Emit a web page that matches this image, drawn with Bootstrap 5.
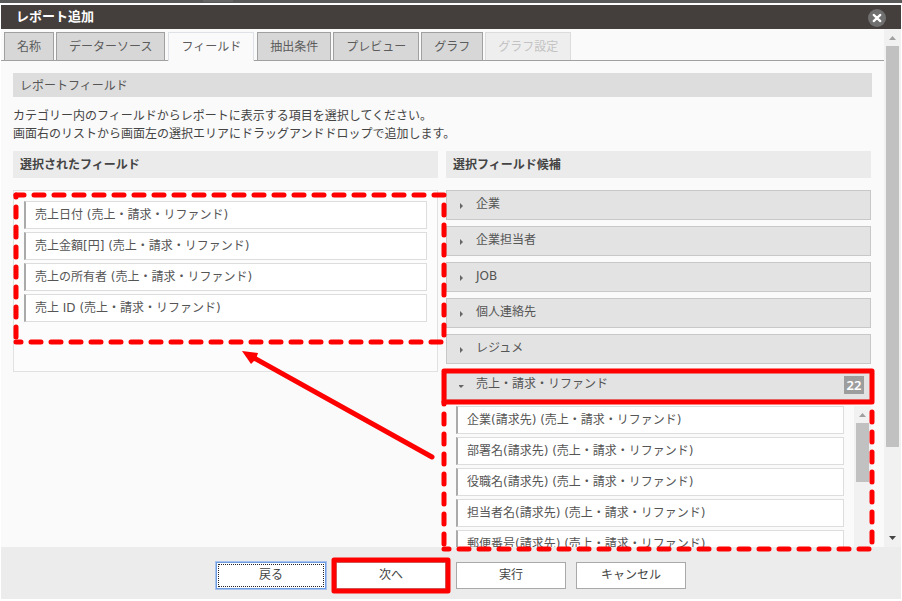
<!DOCTYPE html>
<html lang="ja">
<head>
<meta charset="utf-8">
<meta name="viewport" content="width=device-width, initial-scale=1">
<title>レポート追加</title>
<link href="https://cdn.jsdelivr.net/npm/bootstrap@5.3.0/dist/css/bootstrap.min.css" rel="stylesheet">
<style>
body{font-family:"DejaVu Sans","Noto Sans CJK JP",sans-serif;font-size:12px;line-height:18px;color:#444;background:#fff}
.jp{font-family:"Noto Sans CJK JP",sans-serif}
.min-h-0{min-height:0}
.min-w-0{min-width:0}
.top-strip{height:3px;background:#595959;margin-bottom:2px;flex:none}
.top-strip span{display:block;width:30px;height:2px;margin-left:203px;background:#666}
.dialog{margin:0 1px 2px;background:#fafafa}
.title-bar{height:24px;flex:none;background:#443f3d;color:#fff;padding:0 15px}
.title-bar h1{font-size:13px;line-height:18px;font-weight:700;padding-bottom:2px}
.close-btn{width:18px;height:18px;margin-top:1px}
.tab-bar{flex:none;padding:3px 0 0 3px;gap:2px;border-bottom:1px solid #a0a0a0}
.tab-bar .nav-link{height:28px;padding:4px 12px 5px;border:1px solid #a0a0a0;border-bottom:0;border-radius:0;background:#d7d7d7;color:#5c5c5c;margin:0;line-height:18px}
.tab-bar .nav-link:hover{border-color:#a0a0a0;color:#333}
.tab-bar .nav-link.active{background:#fafafa;color:#5c5c5c;height:29px;margin:0 1px -1px}
.tab-bar .nav-link.disabled{background:#eee;border-color:#dcdcdc;color:#c3c3c3}
.page-area{padding:12px 13px 0 12px}
.page-title{flex:none;background:#ddd;padding:3px 7px;font-size:12px;line-height:18px;color:#555;margin:0 -1px 9px 0}
.page-note{flex:none;margin-bottom:9px}
.columns{gap:8px}
.col-head{flex:none;background:#ebebeb;font-size:12px;line-height:18px;font-weight:700;color:#444;padding:4px 7px 5px;margin-bottom:12px}
.drop-area{border:1px solid #e1e1e1;height:182px;padding:10px;background:#fcfcfc}
.field-item{height:28px;padding:4px 9px;margin-bottom:3px;background:#fff;border:1px solid #ddd;border-left:2px solid #aaa;color:#555;white-space:nowrap;list-style:none}
.cat-btn{flex:none;height:30px;border:1px solid #c8c8c8;background:#e3e3e3;color:#555;padding:0 6px 0 12px;margin-bottom:6px;font-size:12px;line-height:18px}
.cat-btn svg{width:8px;height:8px;margin:2px 9px 0 0;fill:#666}
.cat-btn .lbl{padding-bottom:2px}
.count-tag{background:#9d9d9d;color:#fff;font:600 13px/18px "Noto Sans",sans-serif;width:20px;text-align:center}
.cand-list{padding-left:10px;gap:10px}
.rail{width:17px;background:#f1f1f1;padding:0 2px;flex:none}
.rail svg{width:7px;height:4px;flex:none}
.rail .up{margin:7px 3px 6px;fill:#a0a0a0}
.rail .down{margin:0 3px 7px;fill:#444}
.thumb{background:#c1c1c1;flex:none}
.thumb-page{height:401px}
.thumb-list{height:59px}
.foot{flex:none;background:#ececec;padding:15px 0 10px;gap:10px}
.foot .btn{width:110px;height:27px;padding:2px 0 5px;border:1px solid #a9a9a9;border-radius:0;background:#fff;color:#444;font-size:12px;line-height:18px}
.foot .btn-focus{border-color:#6f9be0;outline:1px solid #a8c3ee;box-shadow:none;padding:0}
.btn-focus span{display:block;border:1px dotted #222;height:23px;margin:1px;line-height:18px}
/* red annotations laid over the dialog */
.note-mark{position:absolute;overflow:visible;pointer-events:none;z-index:5;fill:none;stroke:#f00;stroke-width:5;stroke-linecap:round;stroke-linejoin:round}
.note-mark line{stroke-dasharray:10 10}
.mark-drop{left:3px;top:5px;width:calc(100% + 3px);height:147px}
.mark-cat{left:-2px;top:1px;width:calc(100% + 3px);height:31px}
.mark-list{left:-2px;top:-4px;width:calc(100% + 3px);height:calc(100% + 6px)}
.mark-next{left:-2px;top:-2px;width:114px;height:31px}
.mark-arrow{right:0;top:200px;width:196px;height:110px}
</style>
<script src="https://cdn.jsdelivr.net/npm/bootstrap@5.3.0/dist/js/bootstrap.bundle.min.js"></script>
</head>
<body class="vh-100 d-flex flex-column overflow-hidden">
<div class="top-strip"><span></span></div>
<div class="dialog d-flex flex-column flex-grow-1 min-h-0" role="dialog" aria-labelledby="dlg-title">
  <header class="title-bar d-flex align-items-center justify-content-between">
    <h1 id="dlg-title" class="m-0 jp">レポート追加</h1>
    <button type="button" class="close-btn btn p-0 border-0 d-flex" aria-label="閉じる">
      <svg viewBox="0 0 18 18" width="18" height="18"><circle cx="9" cy="9" r="9" fill="#707070"/><path d="M5.7 5.9l6.6 6.2M12.3 5.9l-6.6 6.2" stroke="#fff" stroke-width="2.2" stroke-linecap="round"/></svg>
    </button>
  </header>
  <div class="d-flex flex-grow-1 min-h-0">
    <main class="d-flex flex-column flex-grow-1 min-w-0 min-h-0">
      <nav class="nav nav-tabs tab-bar jp">
        <a class="nav-link" href="#">名称</a>
        <a class="nav-link" href="#">データーソース</a>
        <a class="nav-link active" aria-current="page" href="#">フィールド</a>
        <a class="nav-link" href="#">抽出条件</a>
        <a class="nav-link" href="#">プレビュー</a>
        <a class="nav-link" href="#">グラフ</a>
        <a class="nav-link disabled" aria-disabled="true" href="#">グラフ設定</a>
      </nav>
      <div class="page-area d-flex flex-column flex-grow-1 min-h-0">
        <h2 class="page-title jp fw-normal">レポートフィールド</h2>
        <p class="page-note jp">カテゴリー内のフィールドからレポートに表示する項目を選択してください。<br>画面右のリストから画面左の選択エリアにドラッグアンドドロップで追加します。</p>
        <div class="columns d-flex flex-grow-1 min-h-0">
          <section class="w-50 position-relative">
            <h3 class="col-head jp">選択されたフィールド</h3>
            <div class="position-relative">
              <ul class="drop-area m-0">
                <li class="field-item">売上日付 (売上・請求・リファンド)</li>
                <li class="field-item">売上金額[円] (売上・請求・リファンド)</li>
                <li class="field-item">売上の所有者 (売上・請求・リファンド)</li>
                <li class="field-item">売上 ID (売上・請求・リファンド)</li>
              </ul>
              <svg class="note-mark mark-drop" aria-hidden="true">
                <line x1="0" y1="0" x2="100%" y2="0" stroke-dashoffset="2"/>
                <line x1="100%" y1="0" x2="100%" y2="100%" stroke-dashoffset="10"/>
                <line x1="100%" y1="100%" x2="0" y2="100%" stroke-dashoffset="17"/>
                <line x1="0" y1="100%" x2="0" y2="0" stroke-dashoffset="15"/>
              </svg>
            </div>
            <svg class="note-mark mark-arrow" aria-hidden="true"><path d="M12 7L190 106"/><path d="M0 0L16 2L14 8L9 13Z" fill="#f00" stroke="none"/></svg>
          </section>
          <section class="w-50 d-flex flex-column min-h-0">
            <h3 class="col-head jp">選択フィールド候補</h3>
            <button type="button" class="cat-btn d-flex align-items-center"><svg viewBox="0 0 8 8"><path d="M1 1l3 3-3 3z"/></svg><span class="lbl">企業</span></button>
            <button type="button" class="cat-btn d-flex align-items-center"><svg viewBox="0 0 8 8"><path d="M1 1l3 3-3 3z"/></svg><span class="lbl">企業担当者</span></button>
            <button type="button" class="cat-btn d-flex align-items-center"><svg viewBox="0 0 8 8"><path d="M1 1l3 3-3 3z"/></svg><span class="lbl">JOB</span></button>
            <button type="button" class="cat-btn d-flex align-items-center"><svg viewBox="0 0 8 8"><path d="M1 1l3 3-3 3z"/></svg><span class="lbl">個人連絡先</span></button>
            <button type="button" class="cat-btn d-flex align-items-center"><svg viewBox="0 0 8 8"><path d="M1 1l3 3-3 3z"/></svg><span class="lbl">レジュメ</span></button>
            <div class="position-relative">
              <button type="button" class="cat-btn d-flex align-items-center w-100" aria-expanded="true"><svg viewBox="0 0 8 8"><path d="M-1 3h6l-3 3z"/></svg><span class="lbl">売上・請求・リファンド</span><span class="count-tag ms-auto">22</span></button>
              <svg class="note-mark mark-cat" aria-hidden="true"><rect width="100%" height="100%"/></svg>
            </div>
            <div class="position-relative flex-grow-1 min-h-0 d-flex">
              <div class="cand-list d-flex flex-grow-1 overflow-hidden">
                <ul class="flex-grow-1 p-0 m-0">
                  <li class="field-item">企業(請求先) (売上・請求・リファンド)</li>
                  <li class="field-item">部署名(請求先) (売上・請求・リファンド)</li>
                  <li class="field-item">役職名(請求先) (売上・請求・リファンド)</li>
                  <li class="field-item">担当者名(請求先) (売上・請求・リファンド)</li>
                  <li class="field-item">郵便番号(請求先) (売上・請求・リファンド)</li>
                </ul>
                <div class="rail d-flex flex-column" aria-hidden="true">
                  <svg class="up" viewBox="0 0 7 4"><path d="M0 4L3.5 0L7 4z"/></svg>
                  <div class="thumb thumb-list"></div>
                </div>
              </div>
              <svg class="note-mark mark-list" aria-hidden="true">
                <line x1="0" y1="0" x2="0" y2="100%" stroke-dashoffset="8"/>
                <line x1="100%" y1="0" x2="100%" y2="100%" stroke-dashoffset="10"/>
                <line x1="0" y1="100%" x2="100%" y2="100%" stroke-dashoffset="5"/>
              </svg>
            </div>
          </section>
        </div>
      </div>
    </main>
    <div class="rail d-flex flex-column" aria-hidden="true">
      <svg class="up" viewBox="0 0 7 4"><path d="M0 4L3.5 0L7 4z"/></svg>
      <div class="thumb thumb-page"></div>
      <svg class="down mt-auto" viewBox="0 0 7 4"><path d="M0 0h7L3.5 4z"/></svg>
    </div>
  </div>
  <footer class="foot d-flex justify-content-center jp">
    <button type="button" class="btn btn-focus"><span>戻る</span></button>
    <div class="position-relative">
      <button type="button" class="btn">次へ</button>
      <svg class="note-mark mark-next" aria-hidden="true"><rect width="100%" height="100%"/></svg>
    </div>
    <button type="button" class="btn">実行</button>
    <button type="button" class="btn">キャンセル</button>
  </footer>
</div>
</body>
</html>
